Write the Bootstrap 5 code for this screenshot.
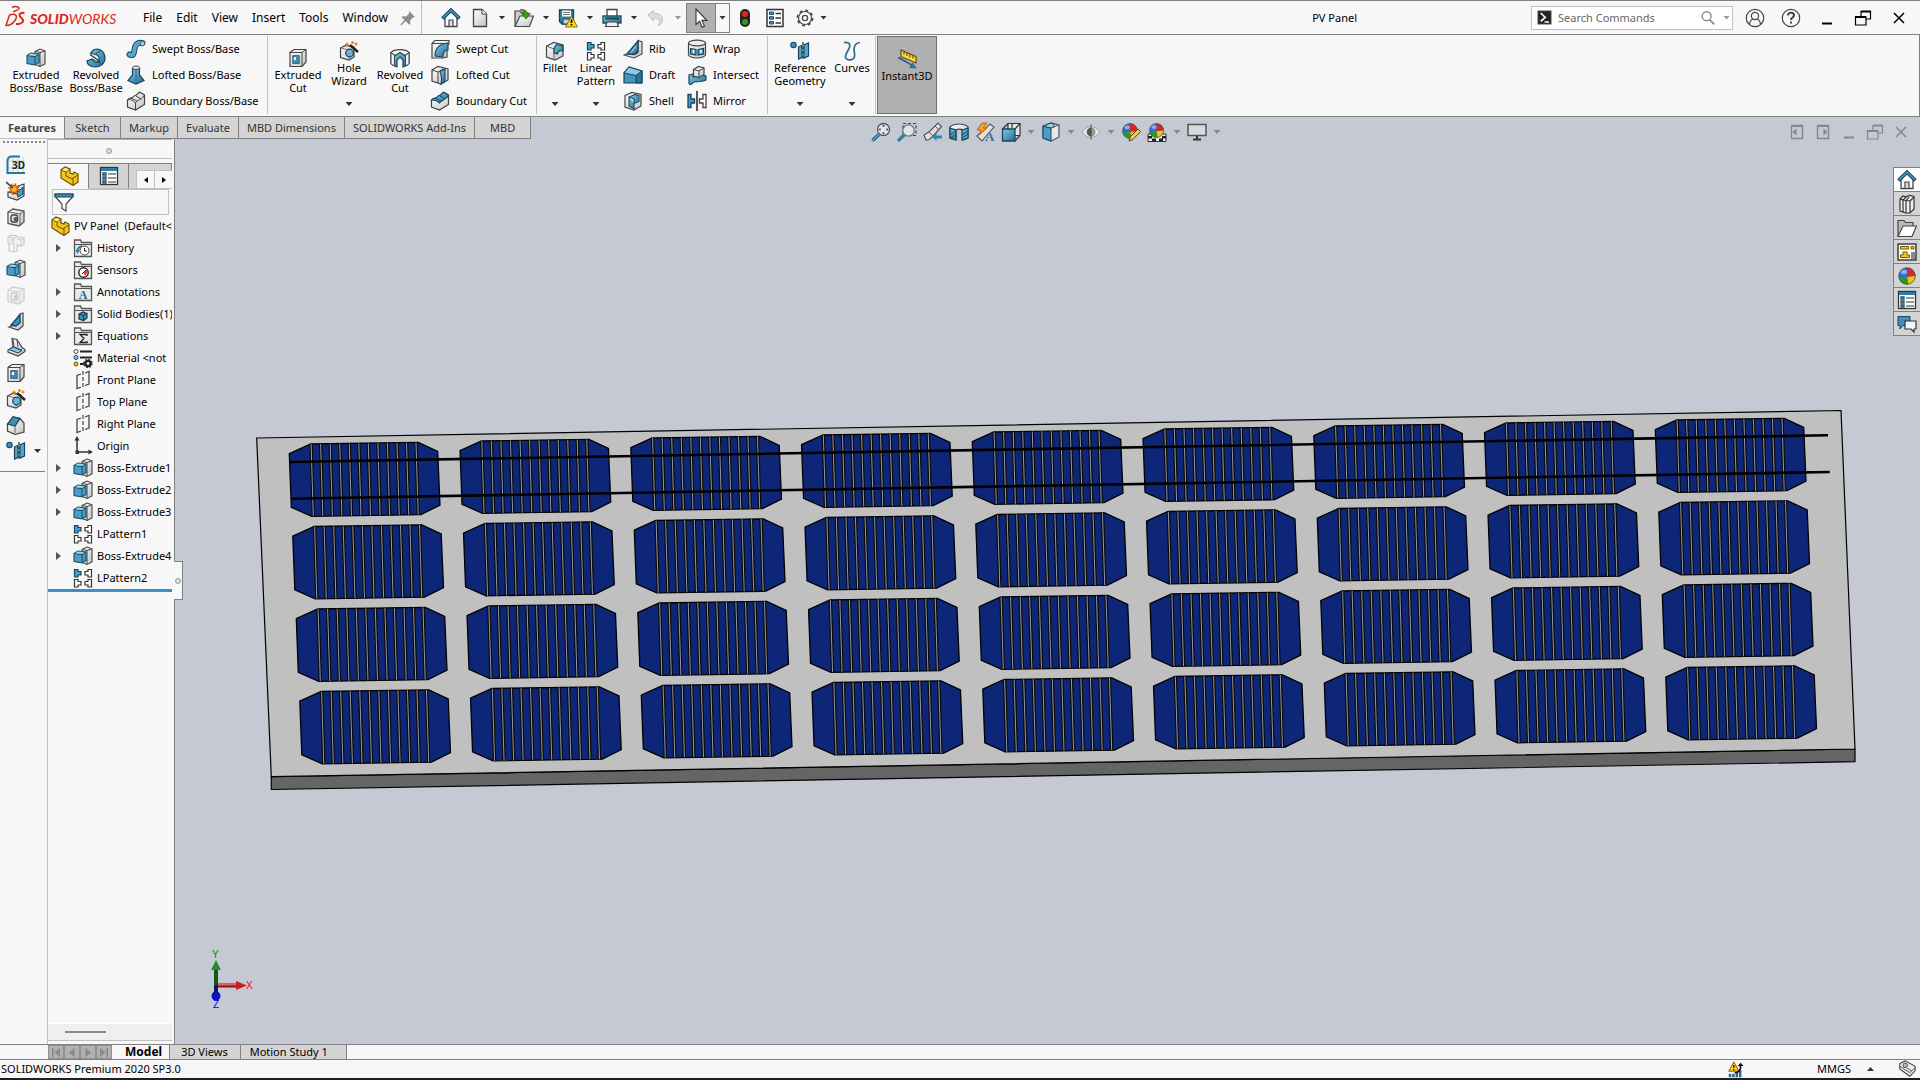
<!DOCTYPE html>
<html lang="en">
<head>
<meta charset="utf-8">
<meta name="viewport" content="width=device-width, initial-scale=1">
<title>PV Panel - SOLIDWORKS</title>
<link rel="stylesheet" href="https://cdn.jsdelivr.net/npm/bootstrap@5.3.0/dist/css/bootstrap.min.css">
<style>
:root{--chrome:#f7f7f7;--line:#808080;--soft:#c0c0c0;--tab:#d4d4d4;--canvas:#c5c9d4}
body{font-family:"Noto Sans","Open Sans",sans-serif;font-size:11px;line-height:16px;color:#000;background:var(--chrome)}
button{border:0;background:none;padding:0;color:inherit;font:inherit}
a{color:inherit;text-decoration:none}
.ic{width:20px;height:20px;flex:none;display:block}
.caret{width:7px;height:4px;background:#333;clip-path:polygon(0 0,100% 0,50% 100%);display:block}
.shell{min-height:100vh}
/* title bar */
.titlebar{height:35px;border-top:1px solid var(--line);border-bottom:1px solid var(--line)}
.brand{width:136px;padding-left:4px}
.menu{font-size:12px}
.menu a{padding:0 7px}
.pin{width:26px}
.quick{border-left:1px solid var(--soft);padding-left:14px}
.tool{width:28px}
.tool-wide{width:30px}
.drop{width:16px}
.select-on{height:30px;width:30px;background:#b0b0b0;border:1px solid var(--line)}
.select-drop{height:30px;width:14px;border:1px solid var(--line);border-left:0}
.doc-title{padding-right:174px}
.search{width:202px;height:24px;border:1px solid var(--soft);background:#fff;padding:0 2px 0 5px;gap:6px}
.search input{border:0;outline:0;width:100%;min-width:0;color:#555;background:none;padding:0}
.search input::placeholder{color:#666;opacity:1}
.winbtn{width:36px}
.winbtn:last-child{margin-right:3px}
/* ribbon */
.ribbon{height:82px;border-bottom:1px solid var(--line);border-right:1px solid var(--line)}
.rgroup{margin:1px 0 2px;border-right:1px solid var(--soft)}
.g-boss{width:268px;padding-left:6px}
.g-cut{width:269px}
.g-feat{width:231px}
.g-ref{width:108px;margin-right:1px}
.big{width:60px;flex:none;padding-top:12px;line-height:13px;text-align:center;align-items:center}
.big.has-drop{padding-top:5px;padding-bottom:8px}
.w-36{width:36px}.w-42{width:42px}.w-46{width:46px}.w-64{width:64px}.w-40{width:40px}
.small-item{height:26px;gap:6px;white-space:nowrap}
.indent{padding-left:4px}
.c-mid{width:64px}
.instant{background:#b0b0b0;border:1px solid #707070;margin:1px 0 2px}
/* command manager tabs */
.cmtabs{height:22px;background:var(--canvas);position:relative}
.cmtab{padding:0 8px;min-width:56px;background:var(--tab);border-right:1px solid var(--line);border-bottom:1px solid var(--line);color:#333;white-space:nowrap}
.cmtab.on{background:var(--chrome);font-weight:700;color:#444;border-bottom-color:var(--soft)}
.hud{position:absolute;top:3px;left:868px;z-index:2;height:24px}
.hud .tool{width:26px}.hud .drop{width:14px}
.hud .caret{background:#85878e}
.mdi{position:absolute;top:3px;right:6px;z-index:2;height:24px;color:#85878e}
.mdi .tool{width:26px}
/* side bars */
.sidebar{width:47px;padding:2px 2px 0 0}
.grip{height:4px;margin:0 0 7px 3px;background-image:radial-gradient(circle at 1px 1px,#888 1px,transparent 1px);background-size:4px 4px}
.side-btn{height:26px;padding-left:6px}
.side-list{border-bottom:1px solid var(--line);padding-bottom:7px}
.tree-panel{width:128px;border-left:1px solid var(--soft);border-right:1px solid var(--line);padding-right:2px;position:relative}
.split{height:20px;padding:4px 3px 0 0;border-bottom:1px solid var(--soft);border-top:1px solid #9cb8bc}
.dot{width:6px;height:6px;border:1px solid #999;border-radius:50%;background:#ddd;display:block}
.ftabs{height:26px;margin-top:4px;padding-left:1px;border-top:1px solid var(--line)}
.ftab{width:40px;border-right:1px solid var(--line);border-bottom:1px solid var(--soft);background:var(--tab)}
.ftab.on{background:var(--chrome);border-bottom-color:var(--chrome)}
.fscroll{width:36px;height:19px;border:1px solid var(--soft);border-right:0;right:0;bottom:0;background:var(--chrome)}
.fscroll button{width:19px;height:17px}
.fscroll button+button{border-left:1px solid var(--soft)}
.filter{height:26px;margin:0 3px 0 4px;border:1px solid var(--soft);padding-left:1px}
.filter input{border:0;background:none;width:100%;min-width:0;outline:0;padding:0}
.tree{border-bottom:3px solid #3b8fc6}
.tree li{height:22px;white-space:nowrap;overflow:hidden;padding-left:8px}
.tree .twist{width:17px;flex:none}
.tree .twist i{display:block;width:5px;height:8px;background:#555;clip-path:polygon(0 0,100% 50%,0 100%)}
.tree .ic{margin-right:4px}
.tree .root{padding-left:2px}
.hscroll{height:17px;background:#efefef;padding-left:17px;border-top:1px solid #fff}
.hscroll span{width:41px;height:2px;background:#8a8a8a}
.hsplit{height:4px;border-top:1px solid var(--soft)}
.flyout{position:absolute;left:126px;top:422px;width:9px;height:39px;background:var(--chrome);border:1px solid var(--line);border-left:0;z-index:2;padding-left:1px}
.view{background:var(--canvas);min-width:0;position:relative}
.view>svg{display:block;width:100%;height:100%;position:absolute;inset:0}
.taskpane{position:absolute;top:28px;right:0;width:27px;border:1px solid var(--line);border-right:0;background:var(--tab)}
.taskpane button{height:24px}
.taskpane button+button{border-top:1px solid var(--line)}
.taskpane .on{background:#fff;height:23px}
/* bottom */
.motion{height:16px;border-top:1px solid var(--line);border-bottom:1px solid var(--line);line-height:12px}
.motion .pad{width:48px}
.motion .nav-b{width:16px;background:#b0b0b0;border:1px solid #909090;color:#888}
.mtab{padding:0 18px 0 9px;background:var(--tab);border-right:1px solid var(--line)}
.mtab.mid{padding:0 12px 0 11px}
.mtab.on{background:var(--chrome);font-weight:700;font-size:12px;padding:0 7px 0 13px}
.status{height:20px;border-bottom:2px solid #1e1e22;padding-left:1px}
.units{margin-left:73px}
.caret.up{transform:rotate(180deg)}
</style>
</head>
<body>
<svg width="0" height="0" class="position-absolute" aria-hidden="true">
<defs>
<linearGradient id="gb" x1="0" y1="0" x2="1" y2="1"><stop offset="0" stop-color="#8cc8e4"/><stop offset="1" stop-color="#1d6d94"/></linearGradient>
<linearGradient id="gw" x1="0" y1="0" x2="1" y2="1"><stop offset="0" stop-color="#fff"/><stop offset="1" stop-color="#c4c4c4"/></linearGradient>
<symbol id="home" viewBox="0 0 20 20"><path d="M4 9v9.500h12V9l-6-6z" fill="#fff" stroke="#444" stroke-width="1.300"/><path d="M8 18v-6h4v6" fill="#ddd" stroke="#444" stroke-width="1.200"/><path d="M1.500 10.500 10 2.200l8.500 8.300" fill="none" stroke="#153f58" stroke-width="3.600"/><path d="M2 10 10 2.200l8 7.800" fill="none" stroke="#4596bd" stroke-width="1.600"/></symbol>
<symbol id="new" viewBox="0 0 20 20"><path d="M3.500 1.500h8.500l4.500 4.500v12.500h-13z" fill="url(#gw)" stroke="#444" stroke-width="1.300"/><path d="M12 1.500v4.500h4.500" fill="#fff" stroke="#444"/></symbol>
<symbol id="open" viewBox="0 0 20 20"><path d="M1 18V3h5l2 2h6v4" fill="#ccc" stroke="#444" stroke-width="1.200"/><path d="M1 18.500 6 8h13.500l-4 10.500z" fill="url(#gw)" stroke="#444" stroke-width="1.200"/><path d="M6 1.500c4-.5 7 1 7.500 4h3L12 11 7.500 5.500h2.700C9.500 3.500 8 2.500 6 1.500z" fill="#3e9a10" stroke="#1c5a02" stroke-width=".6"/></symbol>
<symbol id="save" viewBox="0 0 20 20"><path d="M1.500 2h14v14H4l-2.500-2.500z" fill="#3a82a5" stroke="#1b3f52" stroke-width="1.300"/><path d="M4 2.500h9v6H4z" fill="#fff"/><path d="M5 4.500h7M5 6.500h7" stroke="#777"/><path d="M5 11h7v5H5z" fill="#ccc" stroke="#1b3f52"/><path d="m13.500 8 6 11h-12z" fill="#ffd21c" stroke="#7a5600" stroke-width=".8"/><path d="M13.500 11.500V15M13.500 16v1.600" stroke="#000" stroke-width="1.600"/></symbol>
<symbol id="print" viewBox="0 0 20 20"><path d="M5 8V1.500h10V8" fill="#fff" stroke="#444" stroke-width="1.300"/><path d="M1 8h18v7H1z" fill="url(#gb)" stroke="#1a4c66" stroke-width="1.300"/><path d="M3 10.500h14" stroke="#173f55" stroke-width="2"/><path d="M5 14h10l1.500 4.500h-13z" fill="#eee" stroke="#444" stroke-width="1.200"/></symbol>
<symbol id="undo" viewBox="0 0 20 20"><path d="M2 7 7.500 2.500V5.500c6-.5 9 2.500 9 6 0 3-1.500 5-4.500 6 1.500-2 2-4 1-5.500-1-1.700-3-2-5.500-2v3z" fill="#dcdcdc" stroke="#bbb" stroke-width=".9"/></symbol>
<symbol id="cursor" viewBox="0 0 20 20"><path d="M5 1v15.500l3.600-3.300 2.500 6 2.400-1-2.500-5.800h4.900z" fill="#fff" stroke="#333" stroke-width="1.100"/></symbol>
<symbol id="lights" viewBox="0 0 20 20"><rect x="5" y="1" width="10" height="18" rx="5" fill="#222"/><circle cx="10" cy="6" r="3" fill="#d92a16"/><circle cx="10" cy="14" r="3" fill="#2c9b22"/></symbol>
<symbol id="opts" viewBox="0 0 20 20"><rect x="2" y="1.500" width="16" height="17" fill="#fff" stroke="#333" stroke-width="1.500"/><g fill="#4b9cc1" stroke="#174c68"><path d="M4.500 4h4v2.500h-4zM4.500 8.700h4v2.500h-4zM4.500 13.500h4V16h-4z"/></g><path d="M10.500 5.500H16M10.500 10H16M10.500 15H16" stroke="#333" stroke-width="1.300"/></symbol>
<symbol id="gear" viewBox="0 0 20 20"><circle cx="10" cy="10" r="6.500" fill="#fff" stroke="#444" stroke-width="1.200"/><circle cx="10" cy="10" r="7.600" fill="none" stroke="#444" stroke-width="1.600" stroke-dasharray="3 2.970"/><circle cx="10" cy="10" r="2.600" fill="none" stroke="#444" stroke-width="1.300"/></symbol>
<symbol id="pinic" viewBox="0 0 20 20"><path d="m11 3 6 6-2 .5-3 3 .3 3.500-1 .8-7.600-7.600 1-1 3.500.3 2.800-3z" fill="#8b8b8b"/><path d="M7 12.500 3 17" stroke="#8b8b8b" stroke-width="1.500"/></symbol>
<!-- solid bodies -->
<symbol id="extrude" viewBox="0 0 20 20"><path d="M9 3.500 14 1l5 1.800V16l-5 2.500-5-2z" fill="url(#gw)" stroke="#444" stroke-width="1.100"/><path d="M14 18.500V4.500l5-1.700M14 4.500 9 3.500" fill="none" stroke="#444"/><path d="M1 7.500 5 5l8 1v8.500L9 17l-8-1.500z" fill="#4a9dc4" stroke="#1a4c66" stroke-width="1.100"/><path d="M1 7.500 9 8.700V17M9 8.700 13 6" fill="none" stroke="#1a4c66"/><path d="M2 7.200 5 5.600l6.500.8-2.700 1.600z" fill="#9bd0e8"/></symbol>
<symbol id="revolve" viewBox="0 0 20 20"><path d="M8 1.500c7-2 11 3.500 11 8.500 0 6-5 9-10 9-4.500 0-8-2.500-8-6l5-2c1 3 4 4 6 2.500C14 12 13.500 7 9 6.500L4.500 5z" fill="url(#gb)" stroke="#1a4c66" stroke-width="1.200"/><path d="M9 6.500 14 3M6 11l5 2.500 5 3" fill="none" stroke="#1a4c66"/><path d="m4 6.500 10 7" stroke="#333" stroke-width="1.500"/></symbol>
<symbol id="sweep" viewBox="0 0 20 20"><path d="M3.500 15.500c4 2 4.500-1 5-5 .5-4.500 2.500-7.500 8-6.500" fill="none" stroke="#1a4c66" stroke-width="6" stroke-linecap="round"/><path d="M3.500 15.500c4 2 4.500-1 5-5 .5-4.500 2.500-7.500 8-6.500" fill="none" stroke="#57a8cd" stroke-width="4" stroke-linecap="round"/><ellipse cx="16.500" cy="4.500" rx="2" ry="2.500" fill="#a8d7ea" stroke="#1a4c66" stroke-width=".8"/></symbol>
<symbol id="loft" viewBox="0 0 20 20"><path d="M6.500 3v7L2 15.500l8 3.500 8-3.500L13.500 10V3z" fill="url(#gb)" stroke="#174560" stroke-width="1.200"/><path d="M10 5v14" stroke="#174560" opacity=".5"/><ellipse cx="10" cy="2.700" rx="3.600" ry="1.700" fill="#eee" stroke="#444"/></symbol>
<symbol id="boundary" viewBox="0 0 20 20"><path d="M1.500 9c2-3 4-1 5.500-3s4-1.500 5-3.500 3.500-1 6.500 1.500v9.500l-9 5.500-8-3z" fill="url(#gw)" stroke="#444" stroke-width="1.200"/><path d="M1.500 9c3-1 6 .5 8 3 2-4 5-1.500 9-8M9.500 12v7M5 7l6 3M10 5l5 3" fill="none" stroke="#444"/></symbol>
<symbol id="boundaryc" viewBox="0 0 20 20"><path d="M1.500 9v7l8 3 9-5.500V5z" fill="url(#gw)" stroke="#444" stroke-width="1.200"/><path d="M1.500 9c2-3 4-1 5.500-3s4-1.500 5-3.500 3.500-1 6.500 1.500c-3 6-6 4-9 8-2-2.500-5-3-8-3z" fill="url(#gb)" stroke="#174560" stroke-width="1.200"/><path d="m5 7 6 3M10 5l5 3" stroke="#174560"/></symbol>
<symbol id="excut" viewBox="0 0 20 20"><path d="M2 4.500 6 1.500h12V14l-4 4.500H2z" fill="url(#gw)" stroke="#444" stroke-width="1.200"/><path d="M2 4.500h12v14M14 4.500l4-3" fill="none" stroke="#444"/><path d="M5 8h6v7H5z" fill="#fff" stroke="#174560" stroke-width="1.300"/><path d="M8 8h3v7H5v-3h3z" fill="#3a8bb2"/></symbol>
<symbol id="hole" viewBox="0 0 20 20"><path d="m1.500 7 5-2.500L15 6v10l-5 3-8.500-2.500z" fill="url(#gw)" stroke="#444" stroke-width="1.200"/><path d="M1.500 7 10 9v10" fill="none" stroke="#777"/><circle cx="10.500" cy="12" r="3.800" fill="#6fb2d2" stroke="#174560" stroke-width="1.200"/><path d="m11 4 8 7" stroke="#222" stroke-width="2.400"/><path d="M8 1.500v4M6 3.500h4M13.500 0v3M12 1.500h3M17 1.500v3M15.500 3h3" stroke="#e08a00" stroke-width="1.300"/></symbol>
<symbol id="revcut" viewBox="0 0 20 20"><path d="M1 4.500v11c2 2 4 3 6 3.300V12l3-3 3 3v6.800c2-.3 4.500-1.300 6-3.300v-11z" fill="url(#gb)" stroke="#174560" stroke-width="1.200"/><path d="M1 4.500v11c1 1 2 1.800 3.500 2.300V7zM19 4.500v11c-1 1-2 1.800-3.500 2.300V7z" fill="#f3f3f3" stroke="#444"/><path d="M1 4.500C4 .7 16 .7 19 4.500c-1 1.500-2.500 2.300-4.500 2.800L10 4.500 5.500 7.300C3.500 6.800 2 6 1 4.500z" fill="#f5f5f5" stroke="#444" stroke-width="1.200"/></symbol>
<symbol id="sweepcut" viewBox="0 0 20 20"><path d="M2 4.500 5 1.500h14v3L17 7v11l-4 1H2z" fill="url(#gw)" stroke="#444" stroke-width="1.200"/><path d="M5 17C5 9 9 5 18 4v7c-3 0-5 2-5 7z" fill="url(#gb)" stroke="#174560" stroke-width="1.100"/><path d="M2 4.500h13" stroke="#444"/></symbol>
<symbol id="loftcut" viewBox="0 0 20 20"><path d="m2 5 6-3.500L18 4v11l-7 4-9-3z" fill="url(#gw)" stroke="#444" stroke-width="1.200"/><path d="M2 5l6 2v11M8 7l5-3" fill="none" stroke="#444"/><path d="M10 6.500 15 4v12.500L11 19c1-5 1-8-1-12.500z" fill="url(#gb)" stroke="#174560" stroke-width="1.100"/></symbol>
<symbol id="fillet" viewBox="0 0 20 20"><path d="M1.500 5 9 1.500 18 4v11l-8 4-8.500-3z" fill="url(#gw)" stroke="#444" stroke-width="1.200"/><path d="M1.500 5 9 8v11" fill="none" stroke="#666"/><path d="M9 9c0-3 1-4 3-5.500L18 5v5c-3-1-5 0-5.500 3L9 12z" fill="url(#gb)" stroke="#174560" stroke-width="1.100"/></symbol>
<symbol id="pattern" viewBox="0 0 20 20"><g stroke-width="1.200" stroke="#333" fill="#fff"><path d="M1.500 1.500h3.500v2h3v3.500H5v2H1.500z" fill="#4a9dc4" stroke="#174560"/><path d="M18.500 1.500v7.500H15V7h-3V3.500h3v-2z"/><path d="M1.500 11.500H5v2h3V17H5v2H1.500zM18.500 11.500V19H15v-2h-3v-3.500h3v-2z"/></g></symbol>
<symbol id="rib" viewBox="0 0 20 20"><path d="M15 1.500 19 3v12l-8 4-10-3 3-1.500 8 1 3-2z" fill="url(#gw)" stroke="#444" stroke-width="1.100"/><path d="M4 15 15 2v10.500l-4 3z" fill="url(#gb)" stroke="#174560" stroke-width="1.300"/><path d="m8 13.500 5-6.500" stroke="#bde0ee"/></symbol>
<symbol id="draft" viewBox="0 0 20 20"><path d="M1 8 6 2l13 4v12H1z" fill="#4393ba" stroke="#174560" stroke-width="1.200"/><path d="m1 8 5-6 13 4-6 4.500z" fill="#8cc8e4" stroke="#174560"/><path d="M13 10.500V18h6V6z" fill="#2b7397" stroke="#174560"/></symbol>
<symbol id="shellic" viewBox="0 0 20 20"><path d="M2 4.500 9 1.500l9 2V15l-7 4-9-3z" fill="url(#gw)" stroke="#444" stroke-width="1.200"/><path d="M6 6v9l5 2.500V8zM6 6l6-2.500 4 1v6l-5 2" fill="url(#gb)" stroke="#174560" stroke-width="1.100"/></symbol>
<symbol id="wrap" viewBox="0 0 20 20"><path d="M1.500 4v12c3 4 14 4 17 0V4" fill="url(#gw)" stroke="#444" stroke-width="1.200"/><ellipse cx="10" cy="4" rx="8.500" ry="2.800" fill="#eee" stroke="#444" stroke-width="1.200"/><path d="M3.500 9.500 9 10.500v5.500l-5.500-1zM11 10.500l5.500-1V15L11 16z" fill="#4a9dc4" stroke="#174560" stroke-width="1.200"/><path d="M6.500 11v3M14 11v3" stroke="#fff" stroke-width="1.600"/></symbol>
<symbol id="intersect" viewBox="0 0 20 20"><path d="m2 10 4-1v3l10-2 3 1v4l-5 1.500-7 .5-4 3-1-2z" fill="url(#gb)" stroke="#174560" stroke-width="1.200"/><path d="m6.500 4.500 5-3 5.500 1.500v6.500l-5 3-5.500-1.500z" fill="url(#gw)" stroke="#444" stroke-width="1.200"/><path d="m6.500 4.500 5.500 1.500v6.500M12 6l5-3" fill="none" stroke="#444"/></symbol>
<symbol id="mirror" viewBox="0 0 20 20"><path d="M10 0v20" stroke="#000" stroke-width="1.300"/><path d="M1 3.500h3V8h3.500v4H4v4.500H1z" fill="#4a9dc4" stroke="#174560" stroke-width="1.300"/><path d="M19 3.500h-3V8h-3.500v4H16v4.500h3z" fill="#fff" stroke="#444" stroke-width="1.300"/></symbol>
<symbol id="refgeo" viewBox="0 0 20 20"><circle cx="3.500" cy="4" r="2.700" fill="#3f91b8" stroke="#174560" stroke-width="1.100"/><path d="M8.500 6 12 4.500v12L8.500 18zM14 4l4.500-2v13L14 17z" fill="#58a8cd" stroke="#174560" stroke-width="1.200"/><path d="M13 1v18" stroke="#222" stroke-width="1.200" stroke-dasharray="3 1.500"/></symbol>
<symbol id="curves" viewBox="0 0 20 20"><path d="M2 1.500c5-1 7 2 5 6S1 17 5.500 18.500s8-1 7-6S12 2 18 1.500" fill="none" stroke="#2a6f93" stroke-width="1.700"/></symbol>
<symbol id="instant" viewBox="0 0 20 20"><path d="m4 1 15 6.500V14L4 7.500z" fill="#ffd84a" stroke="#5c4300" stroke-width="1.100"/><path d="M7 2.500v3M10 4v3M13 5v3.500M16 6.500v3" stroke="#5c4300" stroke-width="1.100"/><path d="m1 9 13 7-1 2.500 6 .5-3.500-5-1 1.500L2 8z" fill="#2f7da3" stroke="#1c5878" stroke-width=".8"/></symbol>
<!-- side toolbar -->
<symbol id="sk3d" viewBox="0 0 20 20"><path d="M12 2v16M7 2v16M17 2v16M2 6h17M2 13h17" stroke="#ccc"/><path d="M14 1.500H5.500a4 4 0 0 0-4 4V18H19" fill="none" stroke="#1f79a8" stroke-width="2"/><text x="6" y="14" font-family="Noto Sans" font-size="10" font-weight="700" fill="#222">3D</text></symbol>
<symbol id="burst" viewBox="0 0 20 20"><path d="m12 5 6-2v12l-7 4-9-3v-5l9 2z" fill="url(#gw)" stroke="#444" stroke-width="1.200"/><path d="m11 12 6-6v7l-5 3z" fill="#4a9dc4" stroke="#174560"/><circle cx="8" cy="8" r="3.500" fill="#f7b52a" stroke="#c25e00" stroke-width="1.300"/><circle cx="8" cy="8" r="5" fill="none" stroke="#c25e00" stroke-width="1.800" stroke-dasharray="1.600 2.330"/><path d="m0 1 7 6" stroke="#333" stroke-width="1.500"/></symbol>
<symbol id="cubehole" viewBox="0 0 20 20"><path d="M2 5 7 2l11 2v11l-5 4-11-2.500z" fill="url(#gw)" stroke="#555" stroke-width="1.300"/><path d="m2 5 12 2v12M14 7l4-3" fill="none" stroke="#666"/><rect x="5" y="8" width="6.500" height="7" rx="2" fill="#ddd" stroke="#444" stroke-width="1.400"/><circle cx="9.500" cy="12" r="2" fill="#555"/></symbol>
<symbol id="blocks" viewBox="0 0 20 20"><path d="M2 4 5 2l6 1 1 1 6 1v6l-3 2-4-1v6l-3 1-5-1V11l-1-1z" fill="#eee" stroke="#444" stroke-width="1.200"/><path d="M2 4l6 1v6l-5 0M8 5l3-2M8 11v7M11 6l4 1v6M15 7l3-2M4 6l3 3M7 6 4 9" fill="none" stroke="#444"/></symbol>
<symbol id="wedge" viewBox="0 0 20 20"><path d="m3 16 3-1 8-12 3-1v13l-5 4z" fill="url(#gw)" stroke="#444" stroke-width="1.200"/><path d="M5 14 14 4v8l-4 3z" fill="#3f91b8" stroke="#174560" stroke-width="1.300"/></symbol>
<symbol id="flange" viewBox="0 0 20 20"><path d="m6 1.500 5 1 5 8 3 2v2l-7 4.500-10-4v-2l5-2.500z" fill="url(#gw)" stroke="#444" stroke-width="1.200"/><path d="m7 2 1 8 8 3M11 3l1 7" fill="none" stroke="#555"/><path d="m7 10 9 3.500-4 2.500-9-3.500z" fill="#8cc8e4" stroke="#174560"/></symbol>
<symbol id="chamfer" viewBox="0 0 20 20"><path d="M1.500 9 7 2l7 1.500L18 8v9l-9 2.500L1.500 16z" fill="url(#gw)" stroke="#444" stroke-width="1.200"/><path d="m1.500 9 5.500-7 7 1.500-5 7.500z" fill="#3f91b8" stroke="#174560" stroke-width="1.200"/><path d="M9 11v7" stroke="#666"/></symbol>
<!-- tree -->
<symbol id="part" viewBox="0 0 20 20"><path d="M2 4 6 1l5 2v4l3 1 1-2 4 2v8l-5 3.500L2 12z" fill="#f3c41c" stroke="#6f5200" stroke-width="1.200"/><path d="m2 4 5 2v4l6 3 1-1v7M7 6l4-3M14 12l5-3" fill="none" stroke="#6f5200"/><path d="m3 4 3-2 4 1.500-3 2z" fill="#ffe98a"/></symbol>
<symbol id="props" viewBox="0 0 20 20"><rect x="1.500" y="1.500" width="17" height="17" fill="#fff" stroke="#333" stroke-width="1.300"/><path d="M2 2h16v3H2z" fill="#2d7fa6"/><g fill="#fff" stroke="#174c68" stroke-width="1.300"><path d="M4 7h3v2H4zM4 11h3v2H4zM4 15h3v2H4z"/></g><path d="M9 8h8M9 12h8M9 16h8" stroke="#333" stroke-width="1.200"/></symbol>
<symbol id="funnel" viewBox="0 0 20 20"><path d="M1 2h18v2.500L12 12v7l-4-2.500V12L1 4.500z" fill="#fff" stroke="#444" stroke-width="1.200"/><path d="M1 2h18v3H1z" fill="#3f91b8" stroke="#174560"/></symbol>
<symbol id="folder" viewBox="0 0 20 20"><path d="M1.500 18.500V2h6l1 2.500h10v14z" fill="#e9e9e9" stroke="#555" stroke-width="1.300"/><path d="M2 6.500h16" stroke="#555"/></symbol>
<symbol id="t-hist" viewBox="0 0 20 20"><use href="#folder"/><circle cx="11.500" cy="12.500" r="4.500" fill="#fff" stroke="#444"/><path d="M11.500 10v3h2.500" fill="none" stroke="#222"/><path d="M4 13a7 7 0 0 1 5-5" fill="none" stroke="#2a7ba3" stroke-width="2"/><path d="m2.500 12 2 4 2-4z" fill="#2a7ba3"/></symbol>
<symbol id="t-sens" viewBox="0 0 20 20"><use href="#folder"/><circle cx="10.500" cy="12.500" r="4.700" fill="#fff" stroke="#222" stroke-width="1.400"/><path d="M10.500 12.500 14 9v4l-2 3z" fill="#e0432a"/><path d="m9 14 4-4" stroke="#222"/></symbol>
<symbol id="t-ann" viewBox="0 0 20 20"><use href="#folder"/><text x="10" y="17" text-anchor="middle" font-family="Liberation Serif" font-weight="700" font-size="12" fill="#1d6d94">A</text></symbol>
<symbol id="t-body" viewBox="0 0 20 20"><use href="#folder"/><path d="m6 10 4-2 4 1.500V14l-3.500 2.500L6 15z" fill="#3f91b8" stroke="#123d54" stroke-width="1.200"/><path d="m6 10 4.500 1.500v5M10.500 11.500 14 9.500" fill="none" stroke="#123d54"/></symbol>
<symbol id="t-eq" viewBox="0 0 20 20"><use href="#folder"/><path d="M14 10V8.500H7l4 4-4 4h7V15" fill="none" stroke="#222" stroke-width="1.300"/></symbol>
<symbol id="t-mat" viewBox="0 0 20 20"><g stroke="#222" stroke-width="2"><path d="M7 3.500h12M7 9.500h12M7 16h4"/></g><circle cx="3" cy="3.500" r="2" fill="#fff" stroke="#444"/><circle cx="3" cy="9.500" r="2" fill="#8cc8e4" stroke="#174560"/><circle cx="3" cy="16" r="2" fill="#f3c41c" stroke="#6f5200"/><circle cx="15" cy="15.500" r="2.600" fill="none" stroke="#222" stroke-width="2.400"/><circle cx="15" cy="15.500" r="4" fill="none" stroke="#222" stroke-width="1.400" stroke-dasharray="1.600 1.540"/></symbol>
<symbol id="t-plane" viewBox="0 0 20 20"><path d="M8 4 4 5.500v13L8 17M12 3l4-1.500V14l-4 1.500" fill="none" stroke="#444" stroke-width="1.300"/><path d="M10 1v18" stroke="#444" stroke-width="1.200" stroke-dasharray="4 2"/></symbol>
<symbol id="t-orig" viewBox="0 0 20 20"><path d="M4 3v13h13" fill="none" stroke="#333" stroke-width="1.500"/><path d="m4 0 2.500 4.500h-5zM20 16l-4.500 2.500v-5z" fill="#333"/><rect x="2.500" y="14.500" width="3.500" height="3.500" fill="#333"/></symbol>
<!-- heads-up view -->
<symbol id="zfit" viewBox="0 0 20 20"><path d="m1.500 18.500 6.500-6" stroke="#174560" stroke-width="3.400"/><path d="m1.500 18.500 6.500-6" stroke="#4a9dc4" stroke-width="1.800"/><circle cx="12.500" cy="7.500" r="6" fill="#e4e8ed" stroke="#555" stroke-width="1.300"/><path d="m12.500 2.500 1.500 2h-3zM12.500 12.500l1.500-2h-3zM7.500 7.500l2-1.500v3zM17.500 7.500l-2-1.500v3z" fill="#333"/></symbol>
<symbol id="zarea" viewBox="0 0 20 20"><path d="M6 1.500h13v12H6z" fill="none" stroke="#444" stroke-width="1.200" stroke-dasharray="3 2"/><path d="m1 19 6.500-6.500" stroke="#3a7fa2" stroke-width="3.400"/><circle cx="11.500" cy="8.500" r="5.700" fill="#e0e5ea" stroke="#777" stroke-width="1.200"/></symbol>
<symbol id="zprev" viewBox="0 0 20 20"><path d="m1 13 5-3 9-9 3.500 3.500-7 8-5 5L3 18z" fill="url(#gw)" stroke="#555" stroke-width="1.200"/><path d="m6 10 4 4M12 4l4 4" stroke="#555"/><path d="m9 15 4.500-4v2.500H19v3h-5.500V19z" fill="#2f87b0"/></symbol>
<symbol id="section" viewBox="0 0 20 20"><path d="M1 5c4-4 14-4 18 0v11l-5 2V8c-2-1-5-1-7 0v10l-6-2z" fill="url(#gw)" stroke="#444" stroke-width="1.200"/><path d="M1 6l6 2v10l-6-2zM13 8l6-2v10l-6 2z" fill="#58a8cd" stroke="#174560" stroke-width="1.200"/><path d="m1 13 6-4M1 16l6-4M2 17l5-3M13 13l6-4M13 16l6-4" stroke="#174560"/></symbol>
<symbol id="dynann" viewBox="0 0 20 20"><path d="m2 14 6-5 7-7 4 3-7 8-5 6z" fill="url(#gw)" stroke="#555" stroke-width="1.100"/><path d="m7 1-5 7h4l-2 5 8-7H8l4-5z" fill="#f7a61e" stroke="#b25c00" stroke-width=".9"/><text x="10" y="19" font-family="Liberation Serif" font-weight="700" font-size="13" fill="#2a7ba3">A</text></symbol>
<symbol id="orient" viewBox="0 0 20 20"><path d="M7 1.500h12v12H7z" fill="#e4e6ea"/><path d="M7 1.500h12v12M1.500 7 7 1.500M14 7l5-5.500M14 19l5-5.500M7 1.500v12h12M11 1.500v5" fill="none" stroke="#333" stroke-width="1.200"/><path d="M1.500 7H14v12H1.500z" fill="url(#gb)" stroke="#174560" stroke-width="1.300"/></symbol>
<symbol id="dispstyle" viewBox="0 0 20 20"><path d="M2 4 10 1l8 2v12l-8 4-8-3z" fill="#e8e8e8" stroke="#555" stroke-width="1.200"/><path d="m2 4 8 2v13l-8-3z" fill="#4a9dc4" stroke="#174560"/><path d="m10 6 3-1V2L10 1 2 4z" fill="#9bd0e8" stroke="#174560"/><path d="m10 6 8-3" stroke="#555"/></symbol>
<symbol id="eye" viewBox="0 0 20 20"><path d="M1 10c5-7 13-7 18 0-5 7-13 7-18 0z" fill="#e6e6e6" stroke="#999" stroke-width=".8"/><circle cx="10" cy="10" r="4.300" fill="#555"/><path d="M10 6a4 4 0 0 1 0 8z" fill="#999"/><path d="M10 2.500v15" stroke="#444"/></symbol>
<symbol id="ball" viewBox="0 0 20 20"><circle cx="10" cy="10" r="8.300" fill="#2e6ed8"/><path d="M10 1.700a8.300 8.300 0 0 1 8.300 8.300L10 11z" fill="#d6281f"/><path d="M18.300 10a8.300 8.300 0 0 1-7 8.200L10 11z" fill="#f1c21e"/><path d="M11.300 18.200A8.300 8.300 0 0 1 2 12l8-1z" fill="#2c9b22"/><ellipse cx="7" cy="6" rx="3" ry="2.200" fill="#fff" opacity=".45"/><circle cx="10" cy="10" r="8.300" fill="none" stroke="#444" stroke-width=".7"/></symbol>
<symbol id="appear" viewBox="0 0 20 20"><use href="#ball" width="18" height="18"/><path d="m8 19 1.500-4.500L17 7l2.500 2.500L12 17.500z" fill="#f7cb3e" stroke="#444"/></symbol>
<symbol id="scene" viewBox="0 0 20 20"><path d="M1 12h18v7.500H1z" fill="#eee" stroke="#333"/><path d="M1 14h4v2.500H1zM15 14h4v2.500h-4zM5 16.500h4V19H5zM12 16.500h4V19h-4z" fill="#222"/><use href="#ball" x="1" width="17" height="17"/></symbol>
<symbol id="monitor" viewBox="0 0 20 20"><path d="M1 2.500h18v11H1z" fill="#d8dade" stroke="#555" stroke-width="1.500"/><path d="M10 14v3M6 17.500h8" stroke="#333" stroke-width="2"/></symbol>
<symbol id="boxl" viewBox="0 0 20 20"><path d="M4.500 3.500h11v13h-11z" fill="none" stroke="currentColor" stroke-width="1.400"/><path d="M4 3h12v2H4zM9.500 6.500v7L5.500 10z" fill="currentColor"/></symbol>
<symbol id="boxr" viewBox="0 0 20 20"><path d="M4.500 3.500h11v13h-11z" fill="none" stroke="currentColor" stroke-width="1.400"/><path d="M4 3h12v2H4zM10.500 6.500v7l4-3.500z" fill="currentColor"/></symbol>
<symbol id="wmin" viewBox="0 0 20 20"><path d="M5 15.500h10" stroke="currentColor" stroke-width="2"/></symbol>
<symbol id="wres" viewBox="0 0 20 20"><path d="M8 8V3.500h9.500V11H13M2.500 9H13v8H2.500z" fill="none" stroke="currentColor" stroke-width="1.200"/><path d="M8 3.500h10M2 9h11" stroke="currentColor" stroke-width="2"/></symbol>
<symbol id="wx" viewBox="0 0 20 20"><path d="m5 5 10 10M15 5 5 15" stroke="currentColor" stroke-width="1.500"/></symbol>
<symbol id="books" viewBox="0 0 20 20"><path d="m3 5 3-3 3 1 3-1.500 5 1V15l-4 4H9l-6-2z" fill="#f2f2f2" stroke="#333" stroke-width="1.200"/><path d="m3 5 3 1v12M6 6l3-3M9 19V7l3-4M13 19V7l4-4M6 6l7 1" fill="none" stroke="#333" stroke-width="1.200"/></symbol>
<symbol id="openf" viewBox="0 0 20 20"><path d="M1 18V2.500h6l1.500 2H16V8" fill="#bbb" stroke="#444" stroke-width="1.200"/><path d="M1 18.500 6 8h13.500L15 18.500z" fill="#fff" stroke="#444" stroke-width="1.200"/></symbol>
<symbol id="palette" viewBox="0 0 20 20"><rect x="1" y="2" width="18" height="16" fill="#f8f8f8" stroke="#333" stroke-width="1.400"/><path d="M3.500 4.500h8V7h-8zM14 4.500h3V7h-3zM6 10h4v3h2.500v2.500h-9V13H6z" fill="#f7c51e" stroke="#7a5b00"/><path d="M14 10h4v7h-4z" fill="#888"/></symbol>
<symbol id="forum" viewBox="0 0 20 20"><path d="M1 2.500h12v9H6L3 15v-3.500H1z" fill="#3f91b8" stroke="#174560"/><path d="M8 7h11v8h-2v3l-3-3H8z" fill="#f5f5f5" stroke="#333" stroke-width="1.200"/></symbol>
<symbol id="user" viewBox="0 0 20 20"><circle cx="10" cy="10" r="8.700" fill="none" stroke="#444" stroke-width="1.200"/><circle cx="10" cy="8" r="3.600" fill="none" stroke="#444" stroke-width="1.200"/><path d="M4.500 16c.5-3 2-4.500 3.500-5M15.500 16c-.5-3-2-4.500-3.500-5" fill="none" stroke="#444" stroke-width="1.200"/></symbol>
<symbol id="help" viewBox="0 0 20 20"><circle cx="10" cy="10" r="8.700" fill="none" stroke="#444" stroke-width="1.200"/><path d="M7 7.500c0-4 6.500-3.500 6 0-.3 2-3 2-3 4.500M10 13.500v2" fill="none" stroke="#444" stroke-width="2"/></symbol>
<symbol id="prompt" viewBox="0 0 20 20"><path d="M1 1h18v18H1z" fill="#222" stroke="#888"/><path d="m5 4 6 6-6 5M10 16h6" fill="none" stroke="#fff" stroke-width="2.200"/></symbol>
<symbol id="lens" viewBox="0 0 20 20"><circle cx="8.500" cy="8" r="5" fill="none" stroke="#888" stroke-width="1.500"/><path d="m12 12 5 5" stroke="#888" stroke-width="2"/></symbol>
<symbol id="rebuild" viewBox="0 0 20 20"><path d="M2 15h3v4H2zM6 15h3v4H6zM10 14h3v5h-3zM14 11h3v8h-3z" fill="#2a6f93"/><path d="m8 1 6 11H2z" fill="#ffd21c" stroke="#7a3a00"/><path d="M8 5v3M8 9.500V11" stroke="#000" stroke-width="1.600"/><path d="M9 13c4 0 6-2 6-7h-2.500L16 2l3.500 4H17c0 6-3 9-8 8.500z" fill="#111"/></symbol>
<symbol id="tag" viewBox="0 0 20 20"><path d="m2 4 6-3 11 6v5l-6 6L2 10z" fill="#eee" stroke="#444" stroke-width="1.200"/><circle cx="8" cy="6" r="2.500" fill="#bbb" stroke="#444"/><path d="m2 7 11 7 6-5M10 9l5 3" fill="none" stroke="#444"/></symbol>
</defs>
</svg>

<div class="shell d-flex flex-column">
<header class="titlebar d-flex align-items-center">
  <a href="#" class="brand" aria-label="SOLIDWORKS">
    <svg width="112" height="26" viewBox="0 0 112 26">
      <g fill="none" stroke="#da291c" stroke-width="1.500"><path d="M8 2.500c3-1.500 7-1 7 .8 0 1.600-3 2.500-6 3.500"/><path d="M2 20.500 5.500 10C12 8 14 11 11 15.500 9 18.500 5 20.500 2 20.500z"/><path d="M20.500 8c-3-.5-5.500.5-5 2.500s4.500 3.500 3.500 6c-.8 2-4.500 2.800-7 2.500" stroke-width="2"/></g>
      <text x="26" y="19" font-family="Lato,sans-serif" font-size="14" font-style="italic" fill="#da291c"><tspan font-weight="900">SOLID</tspan><tspan font-weight="400">WORKS</tspan></text>
    </svg>
  </a>
  <nav class="menu d-flex" aria-label="Main menu"><a href="#">File</a><a href="#">Edit</a><a href="#">View</a><a href="#">Insert</a><a href="#">Tools</a><a href="#">Window</a></nav>
  <button class="pin d-flex justify-content-center" aria-label="Pin menu"><svg class="ic"><use href="#pinic"/></svg></button>
  <div class="quick d-flex align-items-center h-100">
    <button class="tool-wide d-flex justify-content-center" aria-label="Home"><svg class="ic"><use href="#home"/></svg></button>
    <button class="tool d-flex justify-content-center" aria-label="New"><svg class="ic"><use href="#new"/></svg></button><button class="drop d-flex justify-content-center" aria-label="New options"><span class="caret"></span></button>
    <button class="tool d-flex justify-content-center" aria-label="Open"><svg class="ic"><use href="#open"/></svg></button><button class="drop d-flex justify-content-center" aria-label="Open options"><span class="caret"></span></button>
    <button class="tool d-flex justify-content-center" aria-label="Save"><svg class="ic"><use href="#save"/></svg></button><button class="drop d-flex justify-content-center" aria-label="Save options"><span class="caret"></span></button>
    <button class="tool d-flex justify-content-center" aria-label="Print"><svg class="ic"><use href="#print"/></svg></button><button class="drop d-flex justify-content-center" aria-label="Print options"><span class="caret"></span></button>
    <button class="tool d-flex justify-content-center" aria-label="Undo"><svg class="ic"><use href="#undo"/></svg></button><button class="drop d-flex justify-content-center opacity-50" aria-label="Undo options"><span class="caret"></span></button>
    <button class="select-on d-flex justify-content-center align-items-center" aria-label="Select"><svg class="ic"><use href="#cursor"/></svg></button><button class="select-drop d-flex justify-content-center align-items-center" aria-label="Select options"><span class="caret"></span></button>
    <button class="tool-wide d-flex justify-content-center" aria-label="Rebuild"><svg class="ic"><use href="#lights"/></svg></button>
    <button class="tool-wide d-flex justify-content-center" aria-label="File properties"><svg class="ic"><use href="#opts"/></svg></button>
    <button class="tool-wide d-flex justify-content-center" aria-label="Options"><svg class="ic"><use href="#gear"/></svg></button><button class="drop d-flex" aria-label="Options menu"><span class="caret"></span></button>
  </div>
  <div class="doc-title ms-auto">PV Panel</div>
  <div class="search d-flex align-items-center me-1">
    <svg width="15" height="15" class="flex-shrink-0"><use href="#prompt"/></svg>
    <input type="text" placeholder="Search Commands" aria-label="Search Commands">
    <svg width="18" height="18" class="flex-shrink-0"><use href="#lens"/></svg><span class="caret flex-shrink-0 opacity-50"></span>
  </div>
  <button class="winbtn d-flex justify-content-center" aria-label="Account"><svg class="ic"><use href="#user"/></svg></button>
  <button class="winbtn d-flex justify-content-center" aria-label="Help"><svg class="ic"><use href="#help"/></svg></button>
  <button class="winbtn d-flex justify-content-center" aria-label="Minimize"><svg class="ic"><use href="#wmin"/></svg></button>
  <button class="winbtn d-flex justify-content-center" aria-label="Restore"><svg class="ic"><use href="#wres"/></svg></button>
  <button class="winbtn d-flex justify-content-center" aria-label="Close"><svg class="ic"><use href="#wx"/></svg></button>
</header>

<section class="ribbon d-flex" aria-label="Features ribbon">
  <div class="rgroup g-boss d-flex">
    <button class="big d-flex flex-column"><svg class="ic"><use href="#extrude"/></svg><span>Extruded<br>Boss/Base</span></button>
    <button class="big d-flex flex-column"><svg class="ic"><use href="#revolve"/></svg><span>Revolved<br>Boss/Base</span></button>
    <div>
      <button class="small-item d-flex align-items-center"><svg class="ic"><use href="#sweep"/></svg>Swept Boss/Base</button>
      <button class="small-item d-flex align-items-center"><svg class="ic"><use href="#loft"/></svg>Lofted Boss/Base</button>
      <button class="small-item d-flex align-items-center"><svg class="ic"><use href="#boundary"/></svg>Boundary Boss/Base</button>
    </div>
  </div>
  <div class="rgroup g-cut d-flex">
    <button class="big d-flex flex-column"><svg class="ic"><use href="#excut"/></svg><span>Extruded<br>Cut</span></button>
    <button class="big has-drop w-42 d-flex flex-column"><svg class="ic"><use href="#hole"/></svg><span>Hole<br>Wizard</span><span class="caret mt-auto"></span></button>
    <button class="big d-flex flex-column"><svg class="ic"><use href="#revcut"/></svg><span>Revolved<br>Cut</span></button>
    <div>
      <button class="small-item d-flex align-items-center"><svg class="ic"><use href="#sweepcut"/></svg>Swept Cut</button>
      <button class="small-item d-flex align-items-center"><svg class="ic"><use href="#loftcut"/></svg>Lofted Cut</button>
      <button class="small-item d-flex align-items-center"><svg class="ic"><use href="#boundaryc"/></svg>Boundary Cut</button>
    </div>
  </div>
  <div class="rgroup g-feat d-flex">
    <button class="big has-drop w-36 d-flex flex-column"><svg class="ic"><use href="#fillet"/></svg><span>Fillet</span><span class="caret mt-auto"></span></button>
    <button class="big has-drop w-46 d-flex flex-column"><svg class="ic"><use href="#pattern"/></svg><span>Linear<br>Pattern</span><span class="caret mt-auto"></span></button>
    <div class="indent c-mid">
      <button class="small-item d-flex align-items-center"><svg class="ic"><use href="#rib"/></svg>Rib</button>
      <button class="small-item d-flex align-items-center"><svg class="ic"><use href="#draft"/></svg>Draft</button>
      <button class="small-item d-flex align-items-center"><svg class="ic"><use href="#shellic"/></svg>Shell</button>
    </div>
    <div class="indent">
      <button class="small-item d-flex align-items-center"><svg class="ic"><use href="#wrap"/></svg>Wrap</button>
      <button class="small-item d-flex align-items-center"><svg class="ic"><use href="#intersect"/></svg>Intersect</button>
      <button class="small-item d-flex align-items-center"><svg class="ic"><use href="#mirror"/></svg>Mirror</button>
    </div>
  </div>
  <div class="rgroup g-ref d-flex">
    <button class="big has-drop w-64 d-flex flex-column"><svg class="ic"><use href="#refgeo"/></svg><span>Reference<br>Geometry</span><span class="caret mt-auto"></span></button>
    <button class="big has-drop w-40 d-flex flex-column"><svg class="ic"><use href="#curves"/></svg><span>Curves</span><span class="caret mt-auto"></span></button>
  </div>
  <button class="big instant d-flex flex-column" aria-pressed="true"><svg class="ic"><use href="#instant"/></svg><span>Instant3D</span></button>
</section>

<div class="cmtabs d-flex">
  <button class="cmtab on">Features</button><button class="cmtab">Sketch</button><button class="cmtab">Markup</button><button class="cmtab">Evaluate</button><button class="cmtab">MBD Dimensions</button><button class="cmtab">SOLIDWORKS Add-Ins</button><button class="cmtab">MBD</button>
  <div class="hud d-flex align-items-center">
    <button class="tool d-flex justify-content-center" aria-label="Zoom to fit"><svg class="ic"><use href="#zfit"/></svg></button>
    <button class="tool d-flex justify-content-center" aria-label="Zoom to area"><svg class="ic"><use href="#zarea"/></svg></button>
    <button class="tool d-flex justify-content-center" aria-label="Previous view"><svg class="ic"><use href="#zprev"/></svg></button>
    <button class="tool d-flex justify-content-center" aria-label="Section view"><svg class="ic"><use href="#section"/></svg></button>
    <button class="tool d-flex justify-content-center" aria-label="Dynamic annotation views"><svg class="ic"><use href="#dynann"/></svg></button>
    <button class="tool d-flex justify-content-center" aria-label="View orientation"><svg class="ic"><use href="#orient"/></svg></button><button class="drop d-flex justify-content-center" aria-label="Orientation menu"><span class="caret"></span></button>
    <button class="tool d-flex justify-content-center" aria-label="Display style"><svg class="ic"><use href="#dispstyle"/></svg></button><button class="drop d-flex justify-content-center" aria-label="Display menu"><span class="caret"></span></button>
    <button class="tool d-flex justify-content-center" aria-label="Hide or show items"><svg class="ic"><use href="#eye"/></svg></button><button class="drop d-flex justify-content-center" aria-label="Hide menu"><span class="caret"></span></button>
    <button class="tool d-flex justify-content-center" aria-label="Edit appearance"><svg class="ic"><use href="#appear"/></svg></button>
    <button class="tool d-flex justify-content-center" aria-label="Apply scene"><svg class="ic"><use href="#scene"/></svg></button><button class="drop d-flex justify-content-center" aria-label="Scene menu"><span class="caret"></span></button>
    <button class="tool d-flex justify-content-center" aria-label="View settings"><svg class="ic"><use href="#monitor"/></svg></button><button class="drop d-flex justify-content-center" aria-label="Settings menu"><span class="caret"></span></button>
  </div>
  <div class="mdi d-flex align-items-center">
    <button class="tool d-flex justify-content-center" aria-label="Tile left"><svg class="ic"><use href="#boxl"/></svg></button>
    <button class="tool d-flex justify-content-center" aria-label="Tile right"><svg class="ic"><use href="#boxr"/></svg></button>
    <button class="tool d-flex justify-content-center" aria-label="Minimize document"><svg class="ic"><use href="#wmin"/></svg></button>
    <button class="tool d-flex justify-content-center" aria-label="Restore document"><svg class="ic"><use href="#wres"/></svg></button>
    <button class="tool d-flex justify-content-center" aria-label="Close document"><svg class="ic"><use href="#wx"/></svg></button>
  </div>
</div>

<main class="d-flex flex-grow-1">
  <aside class="sidebar" aria-label="Feature shortcuts">
    <div class="grip"></div>
    <div class="side-list">
      <button class="side-btn d-flex align-items-center" aria-label="3D sketch"><svg class="ic"><use href="#sk3d"/></svg></button>
      <button class="side-btn d-flex align-items-center" aria-label="Feature works"><svg class="ic"><use href="#burst"/></svg></button>
      <button class="side-btn d-flex align-items-center" aria-label="Isolate"><svg class="ic"><use href="#cubehole"/></svg></button>
      <button class="side-btn d-flex align-items-center opacity-25" aria-label="Combine" disabled><svg class="ic"><use href="#blocks"/></svg></button>
      <button class="side-btn d-flex align-items-center" aria-label="Extruded boss"><svg class="ic"><use href="#extrude"/></svg></button>
      <button class="side-btn d-flex align-items-center opacity-25" aria-label="Cavity" disabled><svg class="ic"><use href="#cubehole"/></svg></button>
      <button class="side-btn d-flex align-items-center" aria-label="Rib"><svg class="ic"><use href="#wedge"/></svg></button>
      <button class="side-btn d-flex align-items-center" aria-label="Flange"><svg class="ic"><use href="#flange"/></svg></button>
      <button class="side-btn d-flex align-items-center" aria-label="Extruded cut"><svg class="ic"><use href="#excut"/></svg></button>
      <button class="side-btn d-flex align-items-center" aria-label="Hole wizard"><svg class="ic"><use href="#hole"/></svg></button>
      <button class="side-btn d-flex align-items-center" aria-label="Chamfer"><svg class="ic"><use href="#chamfer"/></svg></button>
      <button class="side-btn d-flex align-items-center" aria-label="Reference geometry"><svg class="ic me-2"><use href="#refgeo"/></svg><span class="caret"></span></button>
    </div>
  </aside>

  <aside class="tree-panel d-flex flex-column" aria-label="Feature tree">
    <div class="split d-flex justify-content-center align-items-center"><span class="dot"></span></div>
    <div class="ftabs d-flex position-relative">
      <button class="ftab on d-flex align-items-center justify-content-center" aria-label="Feature manager"><svg class="ic"><use href="#part"/></svg></button>
      <button class="ftab d-flex align-items-center justify-content-center" aria-label="Property manager"><svg class="ic"><use href="#props"/></svg></button>
      <button class="ftab flex-fill" aria-label="Configuration manager"></button>
      <div class="fscroll d-flex position-absolute"><button aria-label="Previous tab"><svg width="4" height="6" class="d-block mx-auto"><path d="M4 0v6L0 3z"/></svg></button><button aria-label="Next tab"><svg width="4" height="6" class="d-block mx-auto"><path d="M0 0v6l4-3z"/></svg></button></div>
    </div>
    <label class="filter d-flex align-items-center"><svg class="ic"><use href="#funnel"/></svg><input type="text" aria-label="Filter tree"></label>
    <ul class="tree list-unstyled mb-0">
      <li class="root d-flex align-items-center"><svg class="ic"><use href="#part"/></svg>PV Panel&nbsp; (Default&lt;</li>
      <li class="d-flex align-items-center"><span class="twist"><i></i></span><svg class="ic"><use href="#t-hist"/></svg>History</li>
      <li class="d-flex align-items-center"><span class="twist"></span><svg class="ic"><use href="#t-sens"/></svg>Sensors</li>
      <li class="d-flex align-items-center"><span class="twist"><i></i></span><svg class="ic"><use href="#t-ann"/></svg>Annotations</li>
      <li class="d-flex align-items-center"><span class="twist"><i></i></span><svg class="ic"><use href="#t-body"/></svg>Solid Bodies(1)</li>
      <li class="d-flex align-items-center"><span class="twist"><i></i></span><svg class="ic"><use href="#t-eq"/></svg>Equations</li>
      <li class="d-flex align-items-center"><span class="twist"></span><svg class="ic"><use href="#t-mat"/></svg>Material &lt;not</li>
      <li class="d-flex align-items-center"><span class="twist"></span><svg class="ic"><use href="#t-plane"/></svg>Front Plane</li>
      <li class="d-flex align-items-center"><span class="twist"></span><svg class="ic"><use href="#t-plane"/></svg>Top Plane</li>
      <li class="d-flex align-items-center"><span class="twist"></span><svg class="ic"><use href="#t-plane"/></svg>Right Plane</li>
      <li class="d-flex align-items-center"><span class="twist"></span><svg class="ic"><use href="#t-orig"/></svg>Origin</li>
      <li class="d-flex align-items-center"><span class="twist"><i></i></span><svg class="ic"><use href="#extrude"/></svg>Boss-Extrude1</li>
      <li class="d-flex align-items-center"><span class="twist"><i></i></span><svg class="ic"><use href="#extrude"/></svg>Boss-Extrude2</li>
      <li class="d-flex align-items-center"><span class="twist"><i></i></span><svg class="ic"><use href="#extrude"/></svg>Boss-Extrude3</li>
      <li class="d-flex align-items-center"><span class="twist"></span><svg class="ic"><use href="#pattern"/></svg>LPattern1</li>
      <li class="d-flex align-items-center"><span class="twist"><i></i></span><svg class="ic"><use href="#extrude"/></svg>Boss-Extrude4</li>
      <li class="d-flex align-items-center"><span class="twist"></span><svg class="ic"><use href="#pattern"/></svg>LPattern2</li>
    </ul>
    <div class="hscroll mt-auto d-flex align-items-center"><span></span></div>
    <div class="hsplit"></div>
    <button class="flyout d-flex align-items-center" aria-label="Collapse tree"><span class="dot"></span></button>
  </aside>

  <section class="view flex-grow-1" aria-label="Graphics area">
    <svg viewBox="175 139 1745 905" preserveAspectRatio="xMidYMid meet" role="img" aria-label="PV Panel model">
      <defs>
        <path id="gaps" d="M21.800-9.500l2.200 72M31.300-9.700l2.200 72M40.900-9.800l2.200 72M50.400-10l2.200 72M60-10.100l2.200 72M69.500-10.300l2.200 72M79-10.400l2.200 72M88.600-10.600l2.200 72M98.100-10.700l2.200 72M107.700-10.900l2.200 72M117.200-11l2.200 72M126.700-11.200l2.200 72" fill="none"/>
        <g id="cell">
          <path d="M0 0 21.400-9.700 129-11.400 148.400-2.400 150.700 51.300 131.700 61 22.400 62.600 2 53.600z" fill="#0e2677" stroke="#000" stroke-width="1.300"/>
          <use href="#gaps" stroke="#08090c" stroke-width="3.400"/>
          <use href="#gaps" stroke="#c0c0c0" stroke-width=".8"/>
        </g>
        <g id="cellrow"><use href="#cell"/><use href="#cell" x="170.750" y="-3"/><use href="#cell" x="341.500" y="-6"/><use href="#cell" x="512.250" y="-9"/><use href="#cell" x="683" y="-12"/><use href="#cell" x="853.750" y="-15"/><use href="#cell" x="1024.500" y="-18"/><use href="#cell" x="1195.250" y="-21"/><use href="#cell" x="1366" y="-24"/></g>
      </defs>
      <path d="M271.300 776.700 1855 749v12.700L271.300 789.500z" fill="#656565" stroke="#000" stroke-width="1.200"/>
      <path d="M256.700 438 1841 410.500 1855 749 271.300 776.700z" fill="#c0c0c0" stroke="#000" stroke-width="1.200"/>
      <use href="#cellrow" x="289.300" y="453.700"/><use href="#cellrow" x="292.800" y="536.200"/><use href="#cellrow" x="296.300" y="618.700"/><use href="#cellrow" x="299.800" y="701.200"/>
      <path d="M289.300 462 1828 435.300M292 498.700 1829.700 472" stroke="#000" stroke-width="2.600"/>
      <g id="triad" font-family="Liberation Sans" font-size="10"><path d="M216 985.500h22" stroke="#8e1414" stroke-width="4"/><path d="M216 984.800h22" stroke="#e46060" stroke-width="1.500"/><path d="m236 981 11 4.500-11 4.500z" fill="#c32020"/><path d="M216 985v-18" stroke="#145a14" stroke-width="4"/><path d="m216 960 5 10h-10z" fill="#2a8a2a"/><path d="M216 985v10" stroke="#101070" stroke-width="4"/><circle cx="216" cy="996" r="4.500" fill="#1010b8"/><text x="246" y="989" fill="#f00">X</text><text x="212" y="958" fill="#0a8a0a">Y</text><text x="213" y="1008" fill="#00f">Z</text></g>
    </svg>
    <div class="taskpane d-flex flex-column" role="toolbar" aria-label="Task pane">
      <button class="on d-flex align-items-center justify-content-center" aria-label="Resources"><svg class="ic"><use href="#home"/></svg></button>
      <button class="d-flex align-items-center justify-content-center" aria-label="Design library"><svg class="ic"><use href="#books"/></svg></button>
      <button class="d-flex align-items-center justify-content-center" aria-label="File explorer"><svg class="ic"><use href="#openf"/></svg></button>
      <button class="d-flex align-items-center justify-content-center" aria-label="View palette"><svg class="ic"><use href="#palette"/></svg></button>
      <button class="d-flex align-items-center justify-content-center" aria-label="Appearances"><svg class="ic"><use href="#ball"/></svg></button>
      <button class="d-flex align-items-center justify-content-center" aria-label="Custom properties"><svg class="ic"><use href="#props"/></svg></button>
      <button class="d-flex align-items-center justify-content-center" aria-label="Forum"><svg class="ic"><use href="#forum"/></svg></button>
    </div>
  </section>
</main>

<div class="motion d-flex">
  <span class="pad"></span>
  <button class="nav-b" aria-label="First"><svg width="10" height="9" class="d-block mx-auto"><path d="M1 0h1.500v9H1zM9 0v9L3.500 4.500z" fill="currentColor"/></svg></button>
  <button class="nav-b" aria-label="Previous"><svg width="10" height="9" class="d-block mx-auto"><path d="M7.500 0v9L2 4.500z" fill="currentColor"/></svg></button>
  <button class="nav-b" aria-label="Next"><svg width="10" height="9" class="d-block mx-auto"><path d="M2.500 0v9L8 4.500z" fill="currentColor"/></svg></button>
  <button class="nav-b" aria-label="Last"><svg width="10" height="9" class="d-block mx-auto"><path d="M7.500 0H9v9H7.500zM1 0v9l5.500-4.500z" fill="currentColor"/></svg></button>
  <button class="mtab on">Model</button><button class="mtab mid">3D Views</button><button class="mtab">Motion Study 1</button>
</div>
<footer class="status d-flex align-items-center">
  <span class="me-auto">SOLIDWORKS Premium 2020 SP3.0</span>
  <svg width="17" height="17"><use href="#rebuild"/></svg>
  <span class="units">MMGS</span>
  <span class="caret up ms-3"></span>
  <svg width="18" height="18" class="ms-4 me-1"><use href="#tag"/></svg>
</footer>
</div>
<script src="https://cdn.jsdelivr.net/npm/bootstrap@5.3.0/dist/js/bootstrap.bundle.min.js"></script>
</body>
</html>
